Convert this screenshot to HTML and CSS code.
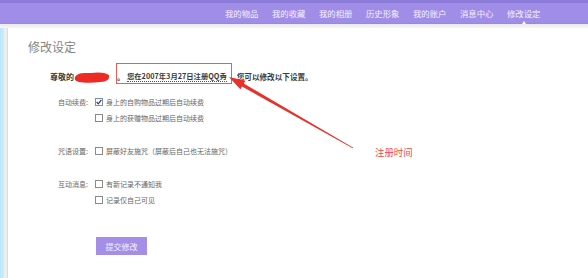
FILE: index.html
```html
<!DOCTYPE html>
<html lang="zh-CN">
<head>
<meta charset="utf-8">
<title>修改设定</title>
<link rel="stylesheet" href="styles.css">
</head>
<body>
<header class="topbar">
  <nav class="nav">
    <a class="nav-item">我的物品</a>
    <a class="nav-item">我的收藏</a>
    <a class="nav-item">我的相册</a>
    <a class="nav-item">历史形象</a>
    <a class="nav-item">我的账户</a>
    <a class="nav-item">消息中心</a>
    <a class="nav-item active">修改设定</a>
  </nav>
</header>
<div class="band"></div>
<div class="page">
  <div class="side"></div>
  <main class="content">
    <h1 class="title">修改设定</h1>
    <p class="intro"><span class="greet">尊敬的</span><svg class="scribble" width="36" height="13" viewBox="0 0 36 13"><path d="M1 6 C4 1 11 2 17 2 C23 1 31 1 35 4 C36 8 33 11 26 11 C19 12 10 12 5 11 C2 10 0 9 1 6 Z" fill="#ee2a25"/></svg><span class="reg"><span class="dot">。</span><span class="reg-text">您在2007年3月27日注册QQ秀</span></span><span class="rest">您可以修改以下设置。</span></p>
    <div class="settings">
      <div class="label">自动续费:</div>
      <div class="opts">
        <label class="opt"><span class="box checked"><svg width="6" height="6" viewBox="0 0 6 6"><path d="M0.6 3 L2.3 4.8 L5.4 0.8" fill="none" stroke="#2d3f6b" stroke-width="1.2"/></svg></span>身上的自购物品过期后自动续费</label>
        <label class="opt"><span class="box"></span>身上的获赠物品过期后自动续费</label>
      </div>
      <div class="label">咒语设置:</div>
      <div class="opts">
        <label class="opt"><span class="box"></span>屏蔽好友施咒（屏蔽后自己也无法施咒）</label>
      </div>
      <div class="label">互动消息:</div>
      <div class="opts">
        <label class="opt"><span class="box"></span>有新记录不通知我</label>
        <label class="opt"><span class="box"></span>记录仅自己可见</label>
      </div>
      <div class="btn-cell"><button class="submit">提交修改</button></div>
    </div>
  </main>
</div>
<svg class="arrow" width="588" height="278" viewBox="0 0 588 278">
  <polygon points="229,77 245.4,80.7 243.8,83.5 353.3,147.7 352.7,148.3 242,86.5 240.4,89.3" fill="#e9302a"/>
</svg>
<span class="note">注册时间</span>
</body>
</html>
```
FILE: styles.css
```css
* { box-sizing: border-box; }
html, body { margin: 0; padding: 0; }
body {
  width: 588px;
  height: 278px;
  overflow: hidden;
  background: #ffffff;
  font-family: "Noto Sans CJK SC", "Noto Sans", sans-serif;
  position: relative;
}
.topbar {
  height: 24px;
  background: #a08de8;
  border-top: 3px solid #8d7bd9;
  border-bottom: 1px solid #9a88e0;
}
.nav {
  display: flex;
  justify-content: flex-end;
  gap: 14px;
  padding-right: 48px;
  height: 20px;
  align-items: center;
}
.nav-item {
  color: #f4f1ff;
  font-size: 8.4px;
  line-height: 10px;
  width: 33px;
  white-space: nowrap;
  position: relative;
}
.nav-item.active::after {
  content: "";
  position: absolute;
  left: 15px;
  top: 13px;
  border-left: 2px solid transparent;
  border-right: 2px solid transparent;
  border-bottom: 3px solid #ffffff;
}
.band {
  height: 4px;
  background: linear-gradient(#e9e9ee, #f6f6f8);
}
.page {
  display: flex;
  height: 250px;
}
.side {
  width: 8px;
  background: linear-gradient(90deg, #b9e8f8 0, #c9eefa 4px, #ededed 4px, #ededed 7px, #dcdcdc 7px);
}
.content {
  flex: 1;
  padding: 12px 0 0 20px;
}
.title {
  margin: 0;
  font-size: 12px;
  line-height: 14px;
  font-weight: normal;
  color: #858585;
}
.intro {
  margin: 18px 0 0 22px;
  height: 10px;
  font-size: 8px;
  line-height: 10px;
  font-weight: bold;
  color: #3a3a3a;
  white-space: nowrap;
  display: flex;
  align-items: center;
}
.greet { width: 24px; }
.scribble { flex: none; }
.reg {
  position: relative;
  margin-left: 6px;
  padding: 0 5px 0 1px;
  display: flex;
}
.reg::before {
  content: "";
  position: absolute;
  left: 0;
  right: 0;
  top: -9px;
  bottom: -2px;
  border: 1px solid #ec5a5a;
}
.dot { width: 10px; }
.reg-text {
  border-bottom: 1px dotted #555;
  font-size: 7.3px;
  line-height: 9px;
}
.rest { margin-left: 5px; font-size: 7.6px; }
.settings {
  margin: 12px 0 0 22px;
  display: grid;
  grid-template-columns: 38px 1fr;
  column-gap: 7px;
  row-gap: 17px;
  color: #666;
  font-size: 7px;
}
.label {
  text-align: right;
  line-height: 16px;
  white-space: nowrap;
}
.opts { display: flex; flex-direction: column; }
.opt {
  display: flex;
  align-items: center;
  height: 16px;
  white-space: nowrap;
}
.box {
  width: 8px;
  height: 8px;
  border: 1px solid #8a8a8a;
  background: #fff;
  margin-right: 3px;
  display: flex;
  align-items: center;
  justify-content: center;
}
.box.checked { border-color: #7a8fb8; }
.btn-cell {
  grid-column: 2;
  margin-top: 12px;
}
.submit {
  width: 51px;
  height: 18px;
  border: none;
  margin-left: 1px;
  background: #a48ee8;
  color: #f5f2ff;
  font-family: "Noto Sans CJK SC", sans-serif;
  font-size: 8px;
  padding: 0;
}
.arrow {
  position: absolute;
  left: 0;
  top: 0;
  pointer-events: none;
}
.note {
  position: absolute;
  left: 375px;
  top: 146px;
  font-size: 9.4px;
  line-height: 12px;
  color: #ea4a45;
  white-space: nowrap;
}
```
